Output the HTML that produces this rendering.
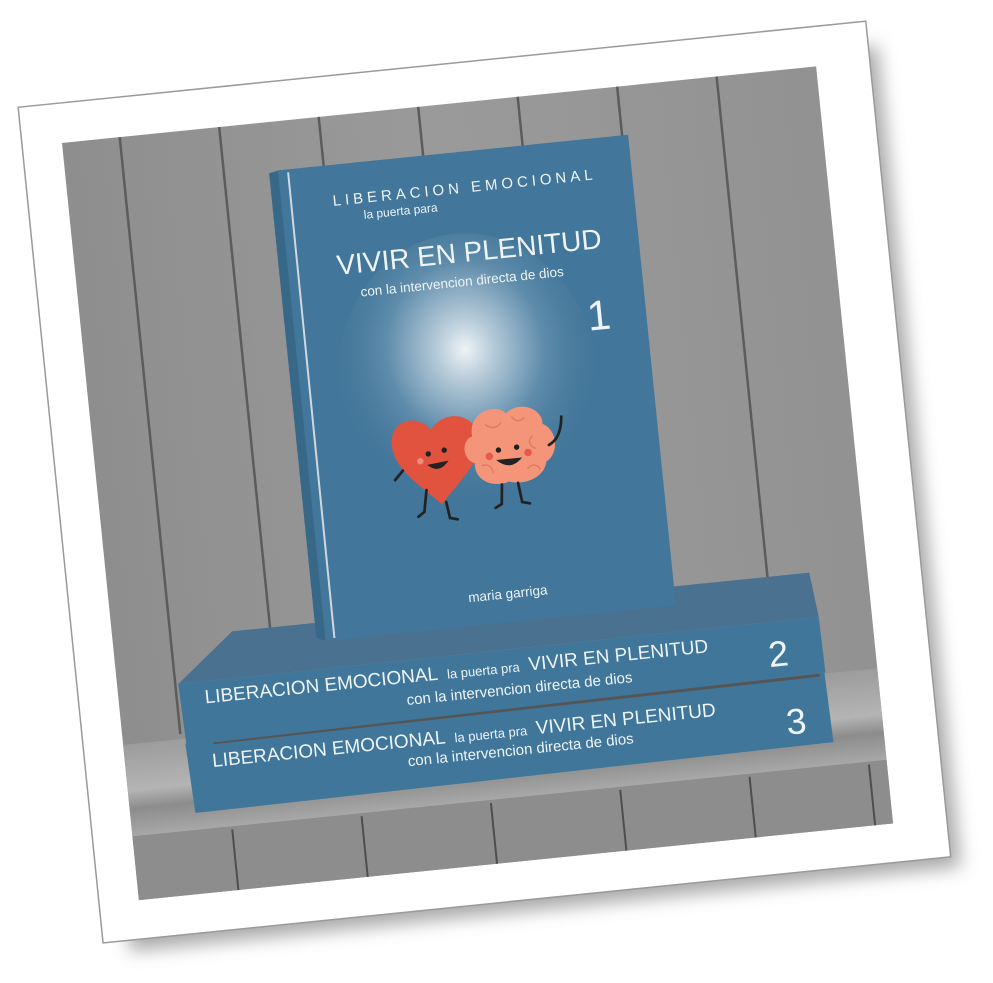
<!DOCTYPE html>
<html><head><meta charset="utf-8"><style>
html,body{margin:0;padding:0;background:#fff;width:993px;height:983px;overflow:hidden}
svg{display:block}
text{font-family:"Liberation Sans",sans-serif;fill:#eef4f8}
</style></head><body>
<svg width="993" height="983" viewBox="0 0 993 983" xmlns="http://www.w3.org/2000/svg">
<defs>
<filter id="sh" x="-10%" y="-10%" width="130%" height="130%"><feGaussianBlur stdDeviation="9"/></filter>
<linearGradient id="wall" x1="0" y1="0" x2="1" y2="0">
<stop offset="0" stop-color="#8e8e8e"/><stop offset="0.5" stop-color="#9a9a9a"/><stop offset="1" stop-color="#929292"/></linearGradient>
<radialGradient id="glow" cx="0.5" cy="0.4" r="0.55">
<stop offset="0" stop-color="#eef3f6"/><stop offset="0.2" stop-color="#b5cad8"/><stop offset="0.55" stop-color="#5f8cab"/><stop offset="1" stop-color="#42769a" stop-opacity="0"/></radialGradient>
<linearGradient id="shelf" x1="0" y1="0" x2="0" y2="1">
<stop offset="0" stop-color="#9c9c9c"/><stop offset="0.5" stop-color="#b4b4b4"/><stop offset="0.7" stop-color="#8c8c8c"/><stop offset="1" stop-color="#a8a8a8"/></linearGradient>
</defs>
<g transform="translate(62,143) rotate(-5.8)">
<rect x="-30" y="-30" width="835" height="825" fill="#555" opacity="0.5" filter="url(#sh)" transform="translate(16,16)"/>
<rect x="-40" y="-40" width="852" height="840" fill="#fff" stroke="#9a9a9a" stroke-width="1.5"/>
<rect x="0" y="0" width="758" height="761" fill="url(#wall)"/>
<g stroke="#5c5c5c" stroke-width="2.5">
<line x1="58" y1="0" x2="58" y2="600"/><line x1="158" y1="0" x2="158" y2="600"/><line x1="258" y1="0" x2="258" y2="600"/><line x1="358" y1="0" x2="358" y2="600"/><line x1="458" y1="0" x2="458" y2="600"/><line x1="558" y1="0" x2="558" y2="600"/><line x1="658" y1="0" x2="658" y2="600"/>
</g>
<rect x="0" y="605" width="758" height="92" fill="url(#shelf)"/>
<rect x="0" y="697" width="758" height="64" fill="#8d8d8d"/>
<g stroke="#4e4e4e" stroke-width="2"><line x1="100" y1="700" x2="100" y2="761"/><line x1="230" y1="700" x2="230" y2="761"/><line x1="360" y1="700" x2="360" y2="761"/><line x1="490" y1="700" x2="490" y2="761"/><line x1="620" y1="700" x2="620" y2="761"/><line x1="740" y1="700" x2="740" y2="761"/></g>
<!-- book 3 -->
<polygon points="62,610 705,604 707,674 65,680" fill="#40769a"/>
<line x1="90" y1="612" x2="700" y2="606" stroke="#555" stroke-width="3"/>
<text x="87" y="636" font-size="19">LIBERACION EMOCIONAL<tspan font-size="13" dx="9">la puerta pra</tspan><tspan dx="9">VIVIR EN PLENITUD</tspan></text>
<text x="395" y="655" font-size="15" text-anchor="middle">con la intervencion directa de dios</text>
<text x="662" y="662" font-size="36">3</text>
<!-- book 2 -->
<polygon points="61,550 120,503 700,503 705,548" fill="#4a7290"/>
<polygon points="61,550 705,548 706,604 63,612" fill="#40769a"/>
<text x="86" y="572" font-size="19">LIBERACION EMOCIONAL<tspan font-size="13" dx="9">la puerta pra</tspan><tspan dx="9">VIVIR EN PLENITUD</tspan></text>
<text x="400" y="594" font-size="15" text-anchor="middle">con la intervencion directa de dios</text>
<text x="651" y="593" font-size="36">2</text>
<!-- book 1 -->
<polygon points="203,51 214,49 212,522 203,518" fill="#386887"/>
<rect x="212" y="49" width="352" height="473" fill="#42769a"/>
<line x1="222" y1="52" x2="221" y2="520" stroke="#cfd8de" stroke-width="2"/>
<ellipse cx="380" cy="275" rx="130" ry="145" fill="url(#glow)"/>
<text x="396" y="90" font-size="15" letter-spacing="4" text-anchor="middle">LIBERACION EMOCIONAL</text>
<text x="330" y="106" font-size="12" text-anchor="middle">la puerta para</text>
<text x="394" y="159" font-size="28" text-anchor="middle">VIVIR EN PLENITUD</text>
<text x="384" y="183" font-size="13.5" text-anchor="middle">con la intervencion directa de dios</text>
<text x="505" y="240" font-size="42">1</text>
<text x="398" y="498" font-size="13.5" text-anchor="middle">maria garriga</text>
<!-- characters -->
<g transform="translate(387,355) scale(1.08)">
<path d="M-45,-30 C-60,-50 -88,-40 -82,-12 C-78,8 -55,25 -42,40 C-30,25 -5,8 -2,-12 C2,-40 -30,-50 -45,-30Z" fill="#e1533f"/>
<path d="M-8,-20 C-10,-45 20,-48 25,-38 C40,-50 60,-38 58,-25 C72,-18 70,5 58,10 C55,25 35,30 22,25 C5,30 -10,20 -8,5 C-20,0 -18,-18 -8,-20Z" fill="#f4957a"/>
<g fill="none" stroke="#e17a62" stroke-width="1.3"><path d="M5,-30 c5,5 10,5 15,0"/><path d="M30,-35 c3,6 8,6 12,2"/><path d="M48,-15 c-6,3 -4,10 2,12"/><path d="M-2,8 c6,-2 10,2 10,8"/><path d="M40,15 c4,-5 10,-3 12,2"/></g>
<circle cx="-50" cy="-8" r="2.5" fill="#222"/><circle cx="-35" cy="-10" r="2.5" fill="#222"/>
<path d="M-52,2 q10,10 20,-2 z" fill="#222"/>
<circle cx="15" cy="-5" r="2.5" fill="#222"/><circle cx="32" cy="-6" r="2.5" fill="#222"/>
<path d="M12,4 q12,12 24,0 z" fill="#222"/>
<circle cx="-58" cy="-2" r="3" fill="#f08a7a"/><circle cx="6" cy="0" r="3.5" fill="#e85a50"/><circle cx="42" cy="0" r="3.5" fill="#e85a50"/>
<g stroke="#222" stroke-width="2.5" fill="none" stroke-linecap="round"><path d="M-55,25 l-4,20 l-6,4"/><path d="M-38,38 l2,15 l7,2"/><path d="M15,27 l-2,18 l-6,3"/><path d="M30,27 l2,18 l7,2"/><path d="M62,-5 q12,-5 14,-25"/><path d="M-75,5 l-8,8"/></g>
</g>
</g>
</svg>
</body></html>
